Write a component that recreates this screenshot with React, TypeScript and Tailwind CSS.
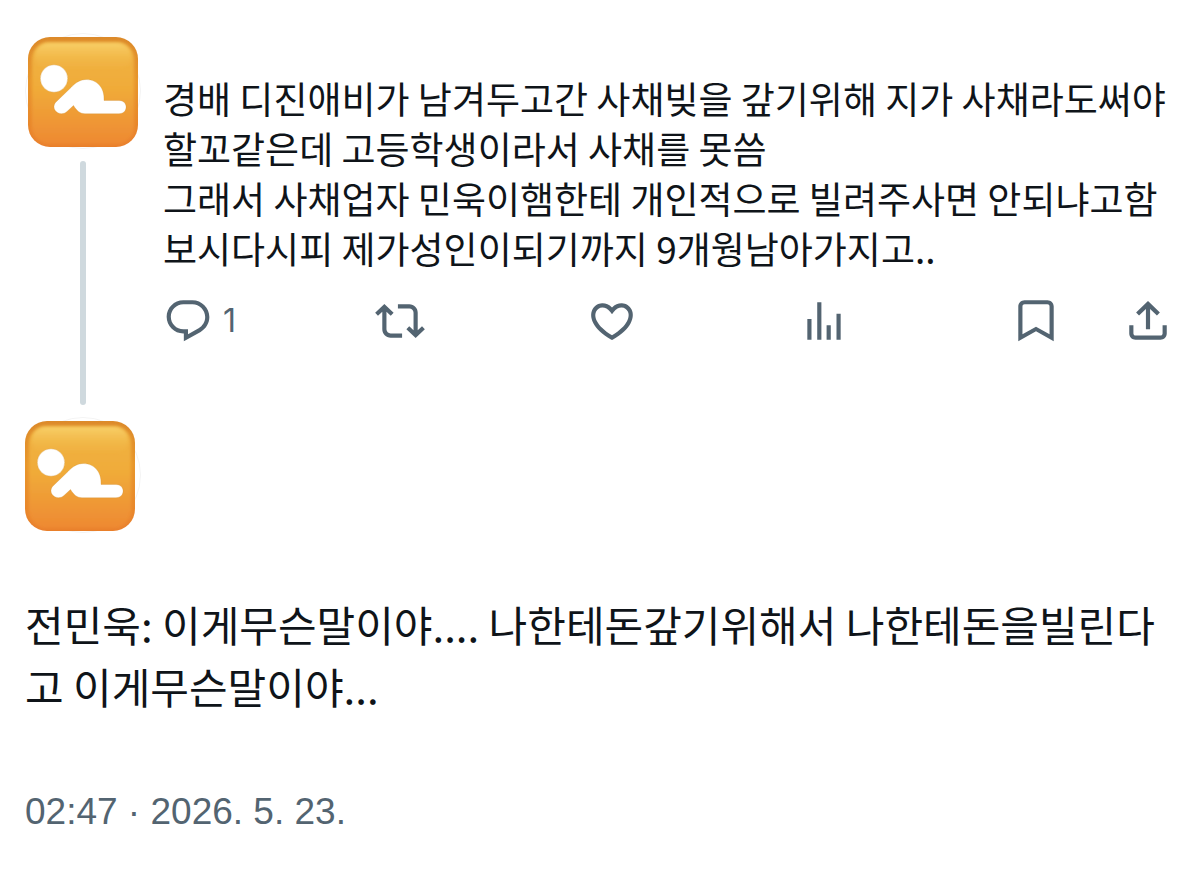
import React from "react";

interface ActionProps {
  label: string;
  path: string;
  count?: number;
  className?: string;
}

const icons = {
  reply:
    "M1.751 10c0-4.42 3.584-8 8.005-8h4.366c4.49 0 8.129 3.64 8.129 8.13 0 2.96-1.607 5.68-4.196 7.11l-8.054 4.46v-3.69h-.067c-4.49.1-8.183-3.51-8.183-8.01zm8.005-6c-3.317 0-6.005 2.69-6.005 6 0 3.37 2.77 6.08 6.138 6.01l.351-.01h1.761v2.3l5.087-2.81c1.951-1.08 3.163-3.13 3.163-5.36 0-3.39-2.744-6.13-6.129-6.13H9.756z",
  repost:
    "M4.5 3.88l4.432 4.14-1.364 1.46L5.5 7.55V16c0 1.1.896 2 2 2H13v2H7.5c-2.209 0-4-1.79-4-4V7.55L1.432 9.48.068 8.02 4.5 3.88zM16.5 6H11V4h5.5c2.209 0 4 1.79 4 4v8.45l2.068-1.93 1.364 1.46-4.432 4.14-4.432-4.14 1.364-1.46 2.068 1.93V8c0-1.1-.896-2-2-2z",
  like:
    "M16.697 5.5c-1.222-.06-2.679.51-3.89 2.16l-.805 1.09-.806-1.09C9.984 6.01 8.526 5.44 7.304 5.5c-1.243.07-2.349.78-2.91 1.91-.552 1.12-.633 2.78.479 4.82 1.074 1.97 3.257 4.27 7.129 6.61 3.87-2.34 6.052-4.64 7.126-6.61 1.111-2.04 1.03-3.7.477-4.82-.561-1.13-1.666-1.84-2.908-1.91zm4.187 7.69c-1.351 2.48-4.001 5.12-8.379 7.67l-.503.3-.504-.3c-4.379-2.55-7.029-5.19-8.382-7.67-1.36-2.5-1.41-4.86-.514-6.67.887-1.79 2.647-2.91 4.601-3.01 1.651-.09 3.368.56 4.798 2.01 1.429-1.45 3.146-2.1 4.796-2.01 1.954.1 3.714 1.22 4.601 3.01.896 1.81.846 4.17-.514 6.67z",
  views:
    "M8.75 21V3h2v18h-2zM18 21V8.5h2V21h-2zM4 21l.004-10h2L6 21H4zm9.248 0v-7h2v7h-2z",
  bookmark:
    "M3.5 5c0-1.66 1.34-3 3-3h11c1.66 0 3 1.34 3 3v16.7L12 16.9l-8.5 4.8V5zm3-1c-.55 0-1 .45-1 1v13.4l6.5-3.7 6.5 3.7V5c0-.55-.45-1-1-1h-11z",
  share:
    "M12 2.4l5.7 5.5-1.41 1.42L13 6.2V16h-2V6.2L7.7 9.32 6.29 7.9 12 2.4zM21 14v4c0 1.66-1.34 3-3 3H6c-1.66 0-3-1.34-3-3v-4h2v4c0 .55.45 1 1 1h12c.55 0 1-.45 1-1v-4h2z"
};

function Action({ label, path, count, className = "" }: ActionProps) {
  return (
    <div className={className}>
      <button
        type="button"
        aria-label={label}
        className="flex items-center gap-[10px] text-[#536471]"
      >
        <svg
          className="size-[50px] shrink-0"
          viewBox="0 0 24 24"
          fill="currentColor"
        >
          <path d={path} />
        </svg>
        {count !== undefined && (
          <span className="font-['Inter',sans-serif] text-[32px] leading-none">
            {count}
          </span>
        )}
      </button>
    </div>
  );
}

function Avatar({ id, x }: { id: string; x: number }) {
  return (
    <svg
      className="size-[116px] shrink-0"
      viewBox="0 0 116 116"
      role="img"
      aria-label="프로필 사진"
    >
      <defs>
        <linearGradient id={`${id}-fill`} x1="0" y1="0" x2="0" y2="1">
          <stop offset="0" stopColor="#f0b444" />
          <stop offset="0.45" stopColor="#f0ab39" />
          <stop offset="1" stopColor="#ee8932" />
        </linearGradient>
        <linearGradient id={`${id}-edge`} x1="0" y1="0" x2="0" y2="1">
          <stop offset="0" stopColor="#dc8a2a" />
          <stop offset="0.4" stopColor="#e8962c" />
          <stop offset="1" stopColor="#e97f2c" />
        </linearGradient>
        <linearGradient id={`${id}-shine`} x1="0" y1="0" x2="0" y2="1">
          <stop offset="0" stopColor="#fbd873" stopOpacity="0.75" />
          <stop offset="1" stopColor="#f3bd4c" stopOpacity="0" />
        </linearGradient>
        <filter id={`${id}-soft`} x="-10%" y="-10%" width="120%" height="120%">
          <feGaussianBlur stdDeviation="1.8" />
        </filter>
        <clipPath id={`${id}-clip`}>
          <rect width="110" height="110" rx="22" />
        </clipPath>
      </defs>
      <circle cx="58" cy="58" r="57.5" fill="#fff" stroke="#f4f4f4" />
      <g transform={`translate(${x} 4)`}>
        <g clipPath={`url(#${id}-clip)`}>
          <rect width="110" height="110" fill={`url(#${id}-edge)`} />
          <rect
            x="4"
            y="5"
            width="102"
            height="102"
            rx="17"
            fill={`url(#${id}-fill)`}
            filter={`url(#${id}-soft)`}
          />
          <rect
            x="7"
            y="6"
            width="96"
            height="26"
            rx="14"
            fill={`url(#${id}-shine)`}
            filter={`url(#${id}-soft)`}
          />
        </g>
        <g fill="#fff" stroke="#c98a2c" strokeOpacity="0.35" strokeWidth="0.8">
          <circle cx="26" cy="41.500" r="13.700" />
          <path d="M27.500 65.500L43 50.500C47.500 45.500 52.500 42.500 58.500 42.500C69 42.500 77 51 76 63.500H91C100.500 63.500 100.500 76.700 91 76.700H57C52 76.700 49 74 45.500 68.500L39 74.500C32.500 80.500 22 73 27.500 65.500Z" />
        </g>
      </g>
    </svg>
  );
}

export default function App() {
  return (
    <main className="min-h-screen bg-white px-[25px] pt-[33px] pb-10 font-['Noto_Sans_CJK_KR',sans-serif] text-[#0f1419]">
      <article className="flex gap-[22px]">
        <div className="flex shrink-0 flex-col items-center">
          <Avatar id="parent" x={3} />
          <div className="mt-3 mb-3 w-[6px] grow rounded-full bg-[#cfd9de]" />
        </div>
        <div className="min-w-0 grow pt-10 pb-[71px]">
          <p className="text-[37px] leading-[50px] whitespace-pre-line">
            {
              "경배 디진애비가 남겨두고간 사채빚을 갚기위해 지가 사채라도써야할꼬같은데 고등학생이라서 사채를 못씀\n그래서 사채업자 민욱이햄한테 개인적으로 빌려주사면 안되냐고함\n보시다시피 제가성인이되기까지 9개웡남아가지고.."
            }
          </p>
          <div className="mt-[23px] flex pr-[2px]">
            <Action className="flex-1" label="답글" path={icons.reply} count={1} />
            <Action className="flex-1" label="재게시" path={icons.repost} />
            <Action className="flex-1" label="마음에 들어요" path={icons.like} />
            <Action className="flex-1" label="조회수" path={icons.views} />
            <div className="flex gap-[62px]">
              <Action label="북마크" path={icons.bookmark} />
              <Action label="공유" path={icons.share} />
            </div>
          </div>
        </div>
      </article>

      <article>
        <Avatar id="reply" x={0} />
        <p className="mt-[60px] text-[42px] leading-[62px]">
          전민욱: 이게무슨말이야.... 나한테돈갚기위해서 나한테돈을빌린다고
          이게무슨말이야...
        </p>
        <time
          dateTime="2026-05-23T02:47"
          className="mt-[70px] block font-['Liberation_Sans',sans-serif] text-[37px] leading-[50px] text-[#536471]"
        >
          02:47 · 2026. 5. 23.
        </time>
      </article>
    </main>
  );
}
